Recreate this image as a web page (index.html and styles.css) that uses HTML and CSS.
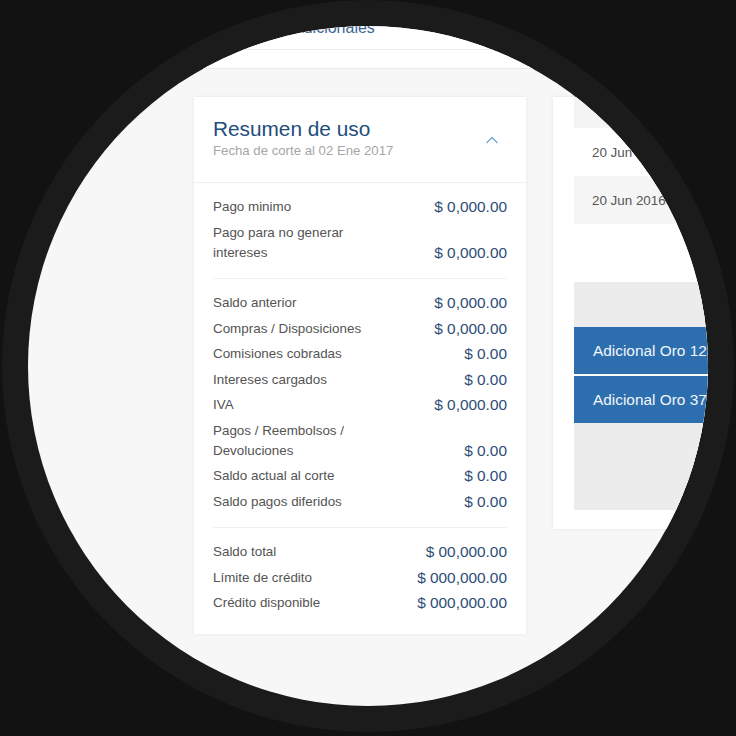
FILE: index.html
```html
<!DOCTYPE html>
<html lang="es">
<head>
<meta charset="utf-8">
<title>Resumen de uso</title>
<link rel="stylesheet" href="styles.css">
</head>
<body>
<div class="stage">
  <div class="ring">
    <div class="lens">
      <header class="topbar">
        <nav class="tabs">
          <span class="tab">Adicionales</span>
        </nav>
      </header>
      <main class="page">
        <section class="card summary">
          <div class="summary-head">
            <div class="titles">
              <h1 class="title">Resumen de uso</h1>
              <p class="subtitle">Fecha de corte al 02 Ene 2017</p>
            </div>
            <svg class="chevron" width="14" height="8" viewBox="0 0 14 8"><polyline points="1.5,7 7,1.5 12.5,7" fill="none" stroke="#6fa6d8" stroke-width="1.3"/></svg>
          </div>
          <div class="group">
            <div class="row"><span class="label">Pago minimo</span><span class="value">$ 0,000.00</span></div>
            <div class="row"><span class="label">Pago para no generar intereses</span><span class="value">$ 0,000.00</span></div>
          </div>
          <div class="group">
            <div class="row"><span class="label">Saldo anterior</span><span class="value">$ 0,000.00</span></div>
            <div class="row"><span class="label">Compras / Disposiciones</span><span class="value">$ 0,000.00</span></div>
            <div class="row"><span class="label">Comisiones cobradas</span><span class="value">$ 0.00</span></div>
            <div class="row"><span class="label">Intereses cargados</span><span class="value">$ 0.00</span></div>
            <div class="row"><span class="label">IVA</span><span class="value">$ 0,000.00</span></div>
            <div class="row"><span class="label">Pagos / Reembolsos / Devoluciones</span><span class="value">$ 0.00</span></div>
            <div class="row"><span class="label">Saldo actual al corte</span><span class="value">$ 0.00</span></div>
            <div class="row"><span class="label">Saldo pagos diferidos</span><span class="value">$ 0.00</span></div>
          </div>
          <div class="group last">
            <div class="row"><span class="label">Saldo total</span><span class="value">$ 00,000.00</span></div>
            <div class="row"><span class="label">Límite de crédito</span><span class="value">$ 000,000.00</span></div>
            <div class="row"><span class="label">Crédito disponible</span><span class="value">$ 000,000.00</span></div>
          </div>
        </section>
        <section class="card side">
          <div class="t-head"></div>
          <div class="t-row">20 Jun 2016</div>
          <div class="t-row alt">20 Jun 2016</div>
          <div class="t-space"></div>
          <div class="t-grey"></div>
          <div class="t-btn">Adicional Oro 1234</div>
          <div class="t-btn">Adicional Oro 3780</div>
          <div class="t-grey tall"></div>
        </section>
      </main>
    </div>
  </div>
</div>
</body>
</html>
```
FILE: styles.css
```css
html, body {
  margin: 0;
  padding: 0;
  background: #121212;
  font-family: "Liberation Sans", Arial, Helvetica, sans-serif;
}
.stage {
  width: 736px;
  height: 736px;
  display: flex;
  justify-content: center;
  align-items: flex-start;
  overflow: hidden;
}
.ring {
  width: 680px;
  height: 680px;
  padding: 26px;
  border-radius: 50%;
  background: #1b1b1b;
  flex: none;
}
.lens {
  width: 680px;
  height: 680px;
  border-radius: 50%;
  overflow: hidden;
  background: #f7f7f7;
}
.topbar {
  height: 42px;
  background: #fff;
  border-bottom: 1px solid #ebebeb;
}
.tabs {
  height: 23px;
  border-bottom: 1px solid #ececec;
  display: flex;
  padding-left: 265px;
  align-items: flex-start;
}
.tab {
  font-size: 16px;
  line-height: 16px;
  margin-top: -6px;
  color: #3d6591;
}
.page {
  display: flex;
  align-items: flex-start;
  gap: 27px;
  padding: 28px 0 0 166px;
}
.card {
  background: #fff;
  box-shadow: 0 0 3px rgba(0, 0, 0, 0.09);
  flex: none;
}
.summary {
  width: 332px;
}
.summary-head {
  display: flex;
  align-items: center;
  justify-content: space-between;
  height: 86px;
  padding: 0 27px 0 19px;
  border-bottom: 1px solid #eeeeee;
  box-sizing: border-box;
}
.titles {
  display: flex;
  flex-direction: column;
  gap: 2px;
  padding-bottom: 4px;
}
.title {
  margin: 0;
  font-size: 20.8px;
  line-height: 24px;
  font-weight: normal;
  color: #224d7c;
}
.subtitle {
  margin: 0;
  font-size: 13.2px;
  line-height: 16px;
  color: #a6a6a6;
}
.chevron {
  display: block;
}
.group {
  margin: 0 19px;
  padding: 14px 0 15.5px;
  border-bottom: 1px solid #efefef;
  display: flex;
  flex-direction: column;
  gap: 5.5px;
}
.group.last {
  border-bottom: none;
  padding-bottom: 21px;
}
.row {
  display: flex;
  justify-content: space-between;
  align-items: flex-end;
}
.label {
  max-width: 170px;
  font-size: 13.4px;
  line-height: 20px;
  color: #545454;
}
.value {
  font-size: 15.4px;
  line-height: 20px;
  color: #2e4e75;
}
.side {
  width: 340px;
  padding: 0 0 19px 21px;
}
.t-head {
  height: 31px;
  background: #f4f4f4;
}
.t-row {
  height: 48px;
  display: flex;
  align-items: center;
  padding-left: 18px;
  font-size: 13.4px;
  color: #555;
  background: #fff;
}
.t-row.alt {
  background: #f5f5f5;
}
.t-space {
  height: 58px;
}
.t-grey {
  height: 45px;
  background: #ececec;
}
.t-grey.tall {
  height: 87px;
}
.t-btn {
  height: 47px;
  margin-bottom: 2px;
  display: flex;
  align-items: center;
  padding-left: 19px;
  font-size: 15.4px;
  color: #f2f6fb;
  background: #2d6eaf;
}
.t-btn + .t-grey {
  margin-top: -2px;
}
```
